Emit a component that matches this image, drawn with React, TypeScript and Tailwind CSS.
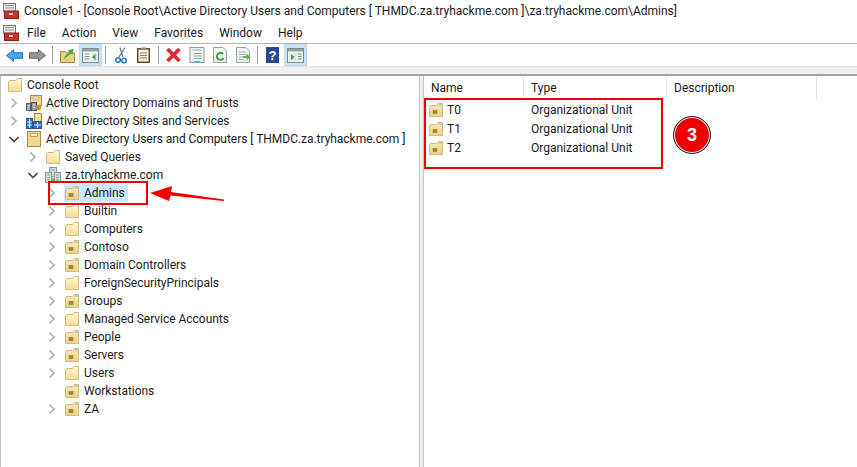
import type { ReactNode } from 'react';

// tree rows, level = indent depth
const tree = [
  { label: 'Active Directory Domains and Trusts', level: 1, icon: 'domains', arrow: 'right' },
  { label: 'Active Directory Sites and Services', level: 1, icon: 'sites', arrow: 'right' },
  { label: 'Active Directory Users and Computers [ THMDC.za.tryhackme.com ]', level: 1, icon: 'book', arrow: 'down' },
  { label: 'Saved Queries', level: 2, icon: 'folder', arrow: 'right' },
  { label: 'za.tryhackme.com', level: 2, icon: 'domain', arrow: 'down' },
  { label: 'Admins', level: 3, icon: 'ou', arrow: 'right', selected: true },
  { label: 'Builtin', level: 3, icon: 'folder', arrow: 'right' },
  { label: 'Computers', level: 3, icon: 'folder', arrow: 'right' },
  { label: 'Contoso', level: 3, icon: 'ou', arrow: 'right' },
  { label: 'Domain Controllers', level: 3, icon: 'ou', arrow: 'right' },
  { label: 'ForeignSecurityPrincipals', level: 3, icon: 'folder', arrow: 'right' },
  { label: 'Groups', level: 3, icon: 'ou', arrow: 'right' },
  { label: 'Managed Service Accounts', level: 3, icon: 'folder', arrow: 'right' },
  { label: 'People', level: 3, icon: 'ou', arrow: 'right' },
  { label: 'Servers', level: 3, icon: 'ou', arrow: 'right' },
  { label: 'Users', level: 3, icon: 'folder', arrow: 'right' },
  { label: 'Workstations', level: 3, icon: 'ou', arrow: 'none' },
  { label: 'ZA', level: 3, icon: 'ou', arrow: 'right' },
];

const indent = ['pl-[6px]', 'pl-[6px]', 'pl-[25px]', 'pl-[44px]'];

const Folder = ({ ou = false }: { ou?: boolean }) => (
  <svg width="16" height="16" viewBox="0 0 16 16">
    <defs>
      <linearGradient id="fold" x1="0" y1="0" x2="0" y2="1">
        <stop offset="0" stopColor="#fff5d0" />
        <stop offset="1" stopColor="#f6dd98" />
      </linearGradient>
      <linearGradient id="ouf" x1="0" y1="0" x2="0" y2="1">
        <stop offset="0" stopColor="#faebbb" />
        <stop offset="1" stopColor="#ebd188" />
      </linearGradient>
    </defs>
    <path d="M1.5 4.5 L3 3.5 H8.5 L10 1.5 H14.5 V14.5 H1.5 Z" fill={ou ? 'url(#ouf)' : 'url(#fold)'} stroke="#d6bb78" />
    <rect x="10.5" y="2" width="3.5" height="2" fill={ou ? '#c6cbc4' : '#f7f0da'} />
    {ou && <rect x="5" y="8.5" width="4" height="3" fill="#a8882c" stroke="#8a7026" strokeWidth="0.5" />}
  </svg>
);

const TreeIcon = ({ kind }: { kind: string }) => {
  if (kind === 'folder') return <Folder />;
  if (kind === 'ou') return <Folder ou />;
  if (kind === 'book')
    return (
      <svg width="16" height="16" viewBox="0 0 16 16">
        <rect x="1.5" y="0.5" width="13" height="15" fill="#f0d992" stroke="#a98b45" />
        <rect x="4.5" y="2.5" width="7" height="3" fill="#fff4cf" stroke="#a98b45" strokeWidth="0.7" />
      </svg>
    );
  if (kind === 'domains')
    return (
      <svg width="16" height="16" viewBox="0 0 16 16">
        <rect x="4.5" y="0.5" width="11" height="10" fill="#f0d992" stroke="#a98b45" />
        <rect x="7" y="2" width="6" height="2" fill="#fff4cf" stroke="#a98b45" strokeWidth="0.5" />
        <rect x="0.5" y="8.5" width="4" height="7" fill="#9aa6ae" stroke="#56626c" />
        <rect x="5.5" y="7.5" width="5" height="8" fill="#8fa6b5" stroke="#46596a" />
        <path d="M2 10.5 h1.5 M2 13 h1.5 M7 10 h2 M7 12.5 h2" stroke="#e3edf2" />
        <circle cx="12.5" cy="12.5" r="2.7" fill="#e08a1e" />
      </svg>
    );
  if (kind === 'sites')
    return (
      <svg width="16" height="16" viewBox="0 0 16 16">
        <rect x="8.5" y="0.5" width="7" height="8" fill="#f0d992" stroke="#a98b45" />
        <rect x="10" y="2" width="4" height="1.6" fill="#fff4cf" />
        <rect x="0.5" y="5.5" width="6" height="10" fill="#2f6fc0" stroke="#24558f" />
        <rect x="7.5" y="8.5" width="8" height="7" fill="#2f6fc0" stroke="#24558f" />
        <path d="M3.5 6 v9 M1 9 h5 M1 12 h5 M11.5 9 v6 M8 12 h7" stroke="#dcebfa" />
      </svg>
    );
  return (
    <svg width="16" height="16" viewBox="0 0 16 16">
      <rect x="4.5" y="0.5" width="7" height="9" fill="#d3dcd8" stroke="#8a9691" />
      <rect x="0.5" y="5.5" width="6" height="10" fill="#dbe3de" stroke="#8a9691" />
      <rect x="9.5" y="5.5" width="6" height="10" fill="#dbe3de" stroke="#8a9691" />
      <path d="M2 8 h3 M2 10.5 h3 M2 13 h3 M11 8 h3 M11 10.5 h3 M11 13 h3 M6 3 h4" stroke="#7d9b90" />
      <rect x="7" y="11" width="2" height="4" fill="#7fb26d" />
    </svg>
  );
};

const Chevron = ({ dir }: { dir: string }) => {
  if (dir === 'none') return <span className="w-[14px] shrink-0" />;
  return (
    <svg className="w-[14px] shrink-0" width="14" height="14" viewBox="0 0 14 14" fill="none" strokeWidth="1.7">
      {dir === 'right' ? (
        <path d="M4.5 2.5 L9 7 L4.5 11.5" stroke="#b0b0b0" />
      ) : (
        <path d="M2.5 5 L7 9.5 L11.5 5" stroke="#4a4a4a" />
      )}
    </svg>
  );
};

const ConsoleIcon = () => (
  <svg width="16" height="16" viewBox="0 0 16 16">
    <rect x="0.5" y="0.5" width="12" height="8" fill="#e8e8e8" stroke="#777" />
    <path d="M2 2.5 h9 M2 5 h9" stroke="#999" />
    <rect x="1.5" y="8" width="14" height="7.5" fill="#c8322b" stroke="#8f1d18" />
    <rect x="6" y="10" width="4" height="2" fill="#f2d0ce" />
  </svg>
);

const ToolBtn = ({ active = false, children }: { active?: boolean; children: ReactNode }) => (
  <div className={`w-[23px] h-[22px] flex items-center justify-center ${active ? 'bg-[#cce4f7] border border-[#bcd9f2]' : ''}`}>
    {children}
  </div>
);

const Sep = () => <div className="w-px h-[18px] bg-[#a0a0a0] mx-[3px]" />;

const PaneIcon = ({ side }: { side: 'left' | 'right' }) => (
  <svg width="17" height="15" viewBox="0 0 17 15">
    <rect x="0.5" y="0.5" width="16" height="14" fill="#f4f6f6" stroke="#7f8c8d" />
    <rect x="1" y="1" width="15" height="2.5" fill="#8fa3ad" />
    {side === 'left' ? (
      <>
        <path d="M2.5 6 h5 M2.5 8.5 h5 M2.5 11 h5" stroke="#8a989e" />
        <rect x="9.5" y="5" width="5" height="8" fill="#dfe7e0" />
        <path d="M13.5 6 v6 l-3.5 -3 z" fill="#3f9c4a" />
      </>
    ) : (
      <>
        <rect x="2.5" y="5" width="7" height="8" fill="#dfe7e0" />
        <path d="M4 6 v6 l3.5 -3 z" fill="#3f9c4a" />
        <path d="M11 6 h3.5 M11 8.5 h3.5 M11 11 h3.5" stroke="#6f7f86" />
      </>
    )}
  </svg>
);

const DocIcon = ({ children }: { children?: ReactNode }) => (
  <svg width="16" height="16" viewBox="0 0 16 16">
    <path d="M1.5 0.5 H11 L14.5 4 V15.5 H1.5 Z" fill="#f1f3f3" stroke="#9aa5a8" />
    <path d="M4 5 h7 M4 7.5 h7 M4 10 h7 M4 12.5 h5" stroke="#9db0b8" />
    {children}
  </svg>
);

function Toolbar() {
  return (
    <div className="h-[23px] flex items-center pl-[3px] border-b border-[#e3e3e3]">
      <ToolBtn>
        <svg width="17" height="13" viewBox="0 0 17 13">
          <path d="M0.5 6.5 L7.5 0.7 V3.7 H16.5 V9.3 H7.5 V12.3 Z" fill="#45a8ea" stroke="#2176bc" />
        </svg>
      </ToolBtn>
      <ToolBtn>
        <svg width="17" height="13" viewBox="0 0 17 13">
          <path d="M16.5 6.5 L9.5 0.7 V3.7 H0.5 V9.3 H9.5 V12.3 Z" fill="#949494" stroke="#6c6c6c" />
        </svg>
      </ToolBtn>
      <Sep />
      <ToolBtn>
        <svg width="15" height="15" viewBox="0 0 15 15">
          <path d="M0.5 3.5 h5 l1 1.5 h8 v9.5 h-14 z" fill="#ecd082" stroke="#a6863a" />
          <path d="M4 11 C5 7 7 6 9 4.5 L8 2 L13.5 1 L12.5 6.5 L11 5.5 C9 7 7 9 4 11 Z" fill="#52a845" />
        </svg>
      </ToolBtn>
      <ToolBtn active>
        <PaneIcon side="left" />
      </ToolBtn>
      <Sep />
      <ToolBtn>
        <svg width="12" height="17" viewBox="0 0 12 17" fill="none">
          <path d="M10 0.5 L4 10 M5 0.5 L8 10" stroke="#6c7a86" strokeWidth="1.3" />
          <circle cx="3" cy="13" r="2.3" stroke="#2a7bd0" strokeWidth="1.6" />
          <circle cx="9" cy="13.5" r="2.2" stroke="#2a7bd0" strokeWidth="1.6" />
        </svg>
      </ToolBtn>
      <ToolBtn>
        <svg width="13" height="16" viewBox="0 0 13 16">
          <rect x="0.75" y="1.75" width="11.5" height="13.5" fill="#f5efe2" stroke="#6b4a24" strokeWidth="1.5" />
          <rect x="4" y="0.5" width="5" height="2.5" fill="#8d8d8d" />
          <path d="M3 6 h7 M3 8.5 h7 M3 11 h7" stroke="#8a7a60" />
        </svg>
      </ToolBtn>
      <Sep />
      <ToolBtn>
        <svg width="17" height="16" viewBox="0 0 17 16">
          <path d="M2.5 2 L14.5 14 M14.5 2 L2.5 14" stroke="#dd2a30" strokeWidth="3.8" />
        </svg>
      </ToolBtn>
      <ToolBtn>
        <svg width="16" height="16" viewBox="0 0 16 16">
          <rect x="1" y="0.5" width="14" height="15" fill="#f1f3f3" stroke="#8f9a9e" />
          <path d="M3.5 3 h9 M5 6.5 h7.5 M5 9 h7.5 M5 11.5 h7.5" stroke="#8fa0a8" />
          <rect x="5" y="14" width="6" height="2" fill="#49b5d8" />
        </svg>
      </ToolBtn>
      <ToolBtn>
        <svg width="16" height="16" viewBox="0 0 16 16">
          <path d="M1.5 0.5 H11 L14.5 4 V15.5 H1.5 Z" fill="#f1f3f3" stroke="#9aa5a8" />
          <path d="M11 7 A3.5 3.5 0 1 0 11.5 11" fill="none" stroke="#3fa047" strokeWidth="2" />
        </svg>
      </ToolBtn>
      <ToolBtn>
        <DocIcon>
          <path d="M8 9 h3.5 v-2.5 l4 3.5 -4 3.5 v-2.5 h-3.5 z" fill="#5cb84c" />
        </DocIcon>
      </ToolBtn>
      <Sep />
      <ToolBtn>
        <svg width="13" height="16" viewBox="0 0 13 16">
          <rect width="13" height="16" fill="#27479b" />
          <text x="6.5" y="13" textAnchor="middle" fontSize="13" fontWeight="700" fill="#ffffff" fontFamily="Liberation Sans, sans-serif">?</text>
        </svg>
      </ToolBtn>
      <ToolBtn active>
        <PaneIcon side="right" />
      </ToolBtn>
    </div>
  );
}

export default function App() {
  return (
    <div className="relative w-[857px] h-[467px] overflow-hidden bg-white text-[12px] text-[#1a1a1a] font-['Roboto','Open_Sans',sans-serif]">
      {/* title bar */}
      <div className="h-[22px] flex items-center pl-[3px] gap-[5px] text-[12px]">
        <ConsoleIcon />
        <span className="whitespace-nowrap">
          Console1 - [Console Root\Active Directory Users and Computers [ THMDC.za.tryhackme.com ]\za.tryhackme.com\Admins]
        </span>
      </div>

      {/* menu */}
      <div className="h-[22px] flex items-center pl-[3px] border-b border-[#b4b4b4] text-[12px]">
        <ConsoleIcon />
        <div className="flex gap-[16px] pl-[8px]">
          {['File', 'Action', 'View', 'Favorites', 'Window', 'Help'].map((m) => (
            <span key={m}>{m}</span>
          ))}
        </div>
      </div>

      <Toolbar />
      <div className="h-[7px] bg-[#efefef]" />

      {/* panes */}
      <div className="flex h-[393px] border-t-2 border-[#a3a3a3]">
        <div className="w-[420px] border-x border-[#c4c4c4]">
          <div className={`h-[18px] flex items-center ${indent[0]}`}>
            <Folder />
            <span className="ml-[4px] whitespace-nowrap">Console Root</span>
          </div>
          {tree.map((row) => (
            <div key={row.label} className={`h-[18px] flex items-center ${indent[row.level]}`}>
              <Chevron dir={row.arrow} />
              <div className={`flex items-center h-[18px] ml-[5px] ${row.selected ? 'bg-[#cce8ff] pr-[3px] -mr-[3px]' : ''}`}>
                <TreeIcon kind={row.icon} />
                <span className="whitespace-nowrap ml-[4px] tracking-[-0.03px]">{row.label}</span>
              </div>
            </div>
          ))}
        </div>

        <div className="w-[3px] bg-[#f0f0f0]" />

        <div className="flex-1 border-l border-[#c4c4c4]">
          <div className="h-[24px] flex items-center">
            <div className="w-[100px] h-full pl-[7px] flex items-center border-r border-[#e5e5e5]">Name</div>
            <div className="w-[143px] h-full pl-[7px] flex items-center border-r border-[#e5e5e5]">Type</div>
            <div className="w-[150px] h-full pl-[7px] flex items-center border-r border-[#e5e5e5]">Description</div>
          </div>
          <div>
            {['T0', 'T1', 'T2'].map((name) => (
              <div key={name} className="h-[19px] flex items-center">
                <div className="w-[100px] flex items-center gap-[3px] pl-[4px]">
                  <Folder ou />
                  <span>{name}</span>
                </div>
                <div className="pl-[7px]">Organizational Unit</div>
              </div>
            ))}
          </div>
        </div>
      </div>

      {/* annotations drawn over the screenshot */}
      <div className="absolute left-[48px] top-[181px] w-[100px] h-[24px] border-[2.5px] border-[#f00000]" />
      <div className="absolute left-[424px] top-[98px] w-[239px] h-[71px] border-[2.5px] border-[#f00000]" />
      <svg className="absolute left-[148px] top-[184px]" width="80" height="20" viewBox="0 0 80 20">
        <path d="M2 9 L24 2 L23 8 L76 15.5 L76 17 L22.5 11.5 L21 17 Z" fill="#f00000" />
      </svg>
      <div className="absolute left-[673px] top-[116px] w-[38px] h-[38px] rounded-full bg-[#ee0000] border-[1.5px] border-[#222] shadow-[inset_0_0_0_1px_#ffffff] flex items-center justify-center text-white text-[18px] font-bold font-['Liberation_Sans',sans-serif]">
        3
      </div>
    </div>
  );
}
